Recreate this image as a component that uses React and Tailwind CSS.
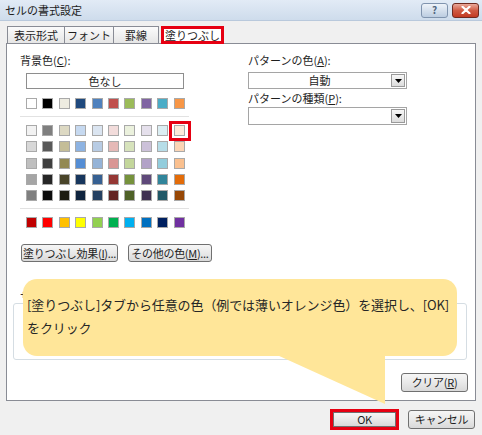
import React from 'react';

const themeRow = ['#FFFFFF', '#000000', '#EEECE1', '#1F497D', '#4F81BD', '#C0504D', '#9BBB59', '#8064A2', '#4BACC6', '#F79646'];

const tintRows = [
  ['#F2F2F2', '#7F7F7F', '#DDD9C3', '#C6D9F0', '#DBE5F1', '#F2DCDB', '#EBF1DD', '#E5E0EC', '#DBEEF3', '#FDEADA'],
  ['#D8D8D8', '#595959', '#C4BD97', '#8DB3E2', '#B8CCE4', '#E5B9B7', '#D7E3BC', '#CCC1D9', '#B7DDE8', '#FBD5B5'],
  ['#BFBFBF', '#3F3F3F', '#938953', '#548DD4', '#95B3D7', '#D99694', '#C3D69B', '#B2A2C7', '#92CDDC', '#FAC08F'],
  ['#A5A5A5', '#262626', '#494429', '#17365D', '#366092', '#953734', '#76923C', '#5F497A', '#31859B', '#E36C09'],
  ['#7F7F7F', '#0C0C0C', '#1D1B10', '#0F243E', '#244061', '#632423', '#4F6128', '#3F3151', '#205867', '#974806'],
];

const standardRow = ['#C00000', '#FF0000', '#FFC000', '#FFFF00', '#92D050', '#00B050', '#00B0F0', '#0070C0', '#002060', '#7030A0'];

const tabs = ['表示形式', 'フォント', '罫線'];
const tabWidths = ['w-[58px]', 'w-[50px]', 'w-[46px]'];

function Swatch({ color, selected }) {
  return (
    <div className="relative w-[11px] h-[11px] border border-[#a9a9a9]" style={{ backgroundColor: color }}>
      {selected && (
        <div className="absolute -left-[6px] -top-[5px] w-[22px] h-[20px] border-[3px] border-[#e60012]" />
      )}
    </div>
  );
}

function SwatchRow({ colors, selectedIndex }) {
  return (
    <div className="flex gap-x-[5.4px] ml-[6px]">
      {colors.map((c, i) => (
        <Swatch key={c + i} color={c} selected={i === selectedIndex} />
      ))}
    </div>
  );
}

function Button({ className = '', children }) {
  return (
    <div
      className={`flex items-center justify-center rounded-[3px] border border-[#707070] bg-gradient-to-b from-[#f6f6f6] via-[#e9e9e9] to-[#d9d9d9] text-[11px] text-[#1e1e1e] ${className}`}
    >
      <span className="whitespace-nowrap tracking-[-0.3px]">{children}</span>
    </div>
  );
}

function Select({ value, className = '' }) {
  return (
    <div className={`flex w-[159px] border border-[#a5a5a5] bg-white ${className}`}>
      <div className="flex-1 flex items-center justify-center text-[11px] text-[#1e1e1e]">{value}</div>
      <div className="m-px w-[14px] flex items-center justify-center border border-[#9a9a9a] bg-gradient-to-b from-[#f7f7f7] to-[#dcdcdc]">
        <svg width="7" height="4" viewBox="0 0 7 4">
          <polygon points="0,0 7,0 3.5,4" fill="#000" />
        </svg>
      </div>
    </div>
  );
}

export default function App() {
  return (
    <div className="relative w-[482px] h-[435px] overflow-hidden bg-[#f0f0f0] font-['Noto_Sans_CJK_JP','Noto_Sans',sans-serif] text-[#1e1e1e]">
      {/* title bar */}
      <div className="h-[21px] flex items-center justify-between pl-[5px] pr-[3px] bg-gradient-to-b from-[#e2ebf6] to-[#cedcec] border-b border-[#b9c9dc]">
        <span className="text-[11px] leading-none text-[#1b1b1b]">セルの書式設定</span>
        <div className="flex gap-[4px]">
          <div className="w-[27px] h-[15px] rounded-[3px] border border-[#8094ae] bg-gradient-to-b from-[#eef3f9] to-[#bccde1] flex items-center justify-center text-[10px] font-bold leading-none text-[#51657e]">
            ?
          </div>
          <div className="w-[27px] h-[15px] rounded-[3px] border border-[#6f2a20] bg-gradient-to-b from-[#e9a89a] via-[#cf5a43] to-[#c23a22] flex items-center justify-center">
            <svg width="10" height="8" viewBox="0 0 10 8">
              <path d="M1.5 0.8 L8.5 7.2 M8.5 0.8 L1.5 7.2" stroke="#fff" strokeWidth="2.2" strokeLinecap="round" />
            </svg>
          </div>
        </div>
      </div>

      {/* tabs */}
      <div className="flex items-end pl-[7px] mt-[5px] h-[17px]">
        {tabs.map((t, i) => (
          <div
            key={t}
            className={`${tabWidths[i]} h-[17px] flex items-center justify-center border border-b-0 border-[#898c95] bg-gradient-to-b from-[#fbfbfb] to-[#e6e6e6] text-[11px] -ml-px first:ml-0`}
          >
            {t}
          </div>
        ))}
        <div className="relative z-10 ml-[2px] -mb-px w-[63px] h-[18px] flex items-center justify-center border-[3px] border-[#e60012] bg-white text-[11px]">
          塗りつぶし
        </div>
      </div>

      {/* panel */}
      <div className="mx-[6px] h-[358px] border border-[#898c95] bg-white flex flex-col">
        <div className="flex pt-[9px]">
          <div className="w-[241px] pl-[13px] flex flex-col">
            <div className="h-[14px] leading-[14px] text-[11px]">
              背景色(<span className="underline">C</span>):
            </div>
            <div className="mt-[6px] ml-[6px] w-[158px] h-[16px] border border-[#8e8e8e] bg-white flex items-center justify-center text-[11px]">
              色なし
            </div>
            <div className="mt-[9px]">
              <SwatchRow colors={themeRow} />
            </div>
            <div className="mt-[7px] h-px w-[169px] bg-[#e2e2e2]" />
            <div className="mt-[8px] flex flex-col gap-y-[5.25px]">
              {tintRows.map((row, i) => (
                <SwatchRow key={i} colors={row} selectedIndex={i === 0 ? 9 : -1} />
              ))}
            </div>
            <div className="mt-[7px] h-px w-[169px] bg-[#e2e2e2]" />
            <div className="mt-[8px]">
              <SwatchRow colors={standardRow} />
            </div>
            <div className="mt-[16px] flex">
              <Button className="ml-px w-[97px] h-[18px]">
                塗りつぶし効果(<span className="underline">I</span>)...
              </Button>
              <Button className="ml-[10px] w-[84px] h-[18px]">
                その他の色(<span className="underline">M</span>)...
              </Button>
            </div>
          </div>

          <div className="flex flex-col">
            <div className="h-[14px] leading-[14px] text-[11px]">
              パターンの色(<span className="underline">A</span>):
            </div>
            <Select value="自動" className="mt-[5px] h-[17px]" />
            <div className="mt-[2px] h-[14px] leading-[14px] text-[11px]">
              パターンの種類(<span className="underline">P</span>):
            </div>
            <Select value="" className="mt-[2px] h-[18px]" />
          </div>
        </div>

        {/* sample */}
        <div className="mt-[28px] pl-[13px] h-[12px] leading-[12px] text-[11px]">サンプル</div>
        <div className="ml-[6px] mr-[8px] mt-px h-[57px] rounded-[3px] border border-[#d5dde3] bg-white" />

        <div className="mt-[13px] flex justify-end pr-[7px]">
          <Button className="w-[67px] h-[19px]">
            クリア(<span className="underline">R</span>)
          </Button>
        </div>
      </div>

      {/* footer */}
      <div className="mt-[7px] h-[23px] flex items-center justify-end gap-[9px] pr-[7px]">
        <div className="w-[69px] h-[21px] border-[3px] border-[#e60012] flex items-stretch">
          <Button className="flex-1 rounded-none">OK</Button>
        </div>
        <Button className="w-[67px] h-[19px]">キャンセル</Button>
      </div>

      {/* callout */}
      <svg className="absolute left-[277px] top-[352px]" width="110" height="53" viewBox="0 0 110 53">
        <polygon points="0,3 108,3 108,52" fill="#ffe699" />
      </svg>
      <div className="absolute left-[23px] top-[279px] w-[434px] h-[77px] rounded-[14px] bg-[#ffe699] pl-[4px] pt-[14px] text-[13px] leading-[23px] tracking-[-0.1px] text-[#262626] whitespace-nowrap">
        <div>[塗りつぶし]タブから任意の色（例では薄いオレンジ色）を選択し、[OK]</div>
        <div>をクリック</div>
      </div>
    </div>
  );
}
